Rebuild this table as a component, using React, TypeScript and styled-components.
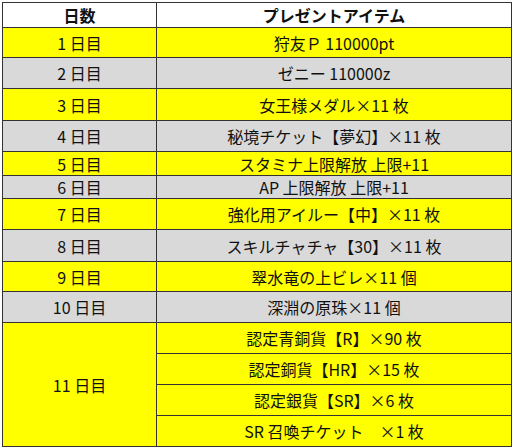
import React from "react";
import styled, { createGlobalStyle } from "styled-components";

const GlobalStyle = createGlobalStyle`
  html, body {
    margin: 0;
    padding: 0;
    background: #ffffff;
  }
`;

const Wrapper = styled.div`
  padding: 2px 0 0 2px;
  font-family: "Noto Sans CJK JP", "Noto Sans", sans-serif;
  color: #111111;
`;

// grid with 1px gaps over a dark background draws the cell borders
const Sheet = styled.div`
  display: grid;
  width: 510px;
  box-sizing: border-box;
  grid-template-columns: 153px 1fr;
  grid-template-rows: 24px 29px 30px 31px 30px 23px 22px 30px 31px 29px 30px 30px 30px 30px 30px;
  gap: 1px;
  padding: 1px;
  background: #333333;
`;

const HeadCell = styled.div`
  display: flex;
  align-items: center;
  justify-content: center;
  background: #ffffff;
  font-size: 16px;
  font-weight: 700;
`;

const Cell = styled.div<{ $tone: "yellow" | "grey"; $span?: number }>`
  display: flex;
  align-items: center;
  justify-content: center;
  background: ${(p) => (p.$tone === "yellow" ? "#ffff00" : "#d9d9d9")};
  grid-row: span ${(p) => p.$span ?? 1};
  font-size: 16px;
  white-space: nowrap;
`;

type Row = { day: string; items: string[]; tone: "yellow" | "grey" };

const rows: Row[] = [
  { day: "1 日目", items: ["狩友Ｐ 110000pt"], tone: "yellow" },
  { day: "2 日目", items: ["ゼニー 110000z"], tone: "grey" },
  { day: "3 日目", items: ["女王様メダル×11 枚"], tone: "yellow" },
  { day: "4 日目", items: ["秘境チケット【夢幻】×11 枚"], tone: "grey" },
  { day: "5 日目", items: ["スタミナ上限解放 上限+11"], tone: "yellow" },
  { day: "6 日目", items: ["AP 上限解放 上限+11"], tone: "grey" },
  { day: "7 日目", items: ["強化用アイルー【中】×11 枚"], tone: "yellow" },
  { day: "8 日目", items: ["スキルチャチャ【30】×11 枚"], tone: "grey" },
  { day: "9 日目", items: ["翠水竜の上ビレ×11 個"], tone: "yellow" },
  { day: "10 日目", items: ["深淵の原珠×11 個"], tone: "grey" },
  {
    day: "11 日目",
    items: [
      "認定青銅貨【R】×90 枚",
      "認定銅貨【HR】×15 枚",
      "認定銀貨【SR】×6 枚",
      "SR 召喚チケット　×1 枚",
    ],
    tone: "yellow",
  },
];

export default function App() {
  return (
    <Wrapper>
      <GlobalStyle />
      <Sheet>
        <HeadCell>日数</HeadCell>
        <HeadCell>プレゼントアイテム</HeadCell>
        {rows.map((r) => (
          <React.Fragment key={r.day}>
            <Cell $tone={r.tone} $span={r.items.length} style={{ gridColumn: 1 }}>
              {r.day}
            </Cell>
            {r.items.map((item) => (
              <Cell key={item} $tone={r.tone} style={{ gridColumn: 2 }}>
                {item}
              </Cell>
            ))}
          </React.Fragment>
        ))}
      </Sheet>
    </Wrapper>
  );
}
